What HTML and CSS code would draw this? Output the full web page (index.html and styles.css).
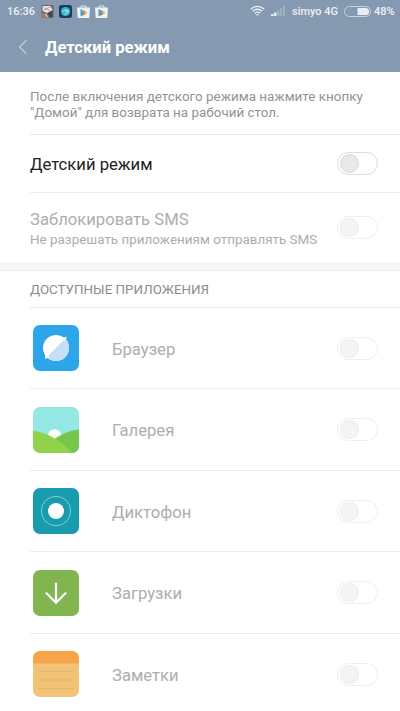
FILE: index.html
```html
<!DOCTYPE html>
<html lang="ru">
<head>
<meta charset="utf-8">
<title>Детский режим</title>
<link rel="stylesheet" href="styles.css">
</head>
<body>
<div class="screen">
  <header class="header">
    <div class="status">
      <span class="clock">16:36</span>
      <svg class="notif" width="13" height="13" viewBox="0 0 12 13"><rect width="12" height="13" rx="1" fill="#6b6568"/><path d="M1 1h8l2 4-5 3-5-2z" fill="#e6e4e4"/><path d="M2 5l7-3M3 3l6 3M1 9l3-1" stroke="#c97f7d" stroke-width=".8"/><path d="M0 9l5-1 3 5H0z" fill="#9a7d6b"/><path d="M6 8l5-2v6H8z" fill="#3f4755"/><path d="M4 9l2 3" stroke="#eee"/></svg>
      <svg class="notif" width="13" height="13" viewBox="0 0 13 13"><rect width="13" height="13" rx="2.5" fill="#22395f"/><circle cx="6.5" cy="6.5" r="4.6" fill="#35b5cc"/><path d="M3 7c2-3 5-3 7-1-1 3-4 4-6 3 2 0 3-1 4-2-2-1-3-1-5 0z" fill="#8ce5df"/></svg>
      <svg class="notif" width="13" height="13" viewBox="0 0 13 13"><path d="M4 3V1h5v2" fill="none" stroke="#dde5eb"/><path d="M0 2.500h13L12.300 13H.7z" fill="#eef2f3"/><path d="M3.500 4v7.500L7 7.700z" fill="#27a9c9"/><path d="M3.500 4L7 7.700 8.600 6.300z" fill="#4bb878"/><path d="M3.500 11.500L7 7.700l1.600 1.400z" fill="#dc4256"/><path d="M7 7.700l1.600-1.400 2 1.400-2 1.400z" fill="#efb53e"/></svg>
      <svg class="notif" width="13" height="13" viewBox="0 0 13 13"><path d="M4 3V1h5v2" fill="none" stroke="#dde5eb"/><path d="M0 2.500h13L12.300 13H.7z" fill="#eef2f3"/><path d="M3.500 4v7.500L7 7.700z" fill="#27a9c9"/><path d="M3.500 4L7 7.700 8.600 6.300z" fill="#4bb878"/><path d="M3.500 11.500L7 7.700l1.600 1.400z" fill="#dc4256"/><path d="M7 7.700l1.600-1.400 2 1.400-2 1.400z" fill="#efb53e"/></svg>
      <span class="spacer"></span>
      <svg class="wifi" width="15" height="12" viewBox="0 0 15 12" fill="none" stroke="#e9eef3" stroke-width="1.300"><path d="M.7 4.200Q7.500-1.500 14.300 4.200M2.800 6.300Q7.500 2.200 12.200 6.300M4.800 8.300Q7.500 6 10.200 8.300"/><path d="M6 9.200h3L7.500 11z" fill="#e9eef3" stroke="none"/></svg>
      <svg class="signal" width="14" height="10" viewBox="0 0 14 10"><path d="M0 8h2.500v2H0zM3 6.500h2.500V10H3z" fill="#e9eef3"/><path d="M6.300 4.500h2V10h-2zM9.200 2.500h1.700V10H9.200zM12 0h1.700v10H12z" fill="#a5b4c6"/></svg>
      <span class="carrier">simyo 4G</span>
      <svg class="battery" width="27" height="11" viewBox="0 0 27 11"><rect x=".5" y=".5" width="26" height="10" rx="5" fill="none" stroke="#c9d3df"/><path d="M13.500 2h8a3.500 3.500 0 0 1 0 7h-8z" fill="#e9eef3"/></svg>
      <span class="percent">48%</span>
    </div>
    <div class="titlebar">
      <svg class="back" width="10" height="16" viewBox="0 0 10 16"><path d="M8.500 1L1.500 8l7 7" fill="none" stroke="#c6d0dc" stroke-width="1.100"/></svg>
      <h1 class="title">Детский режим</h1>
    </div>
  </header>

  <div class="notice">После включения детского режима нажмите кнопку<br>"Домой" для возврата на рабочий стол.</div>

  <div class="row mode"><span class="label">Детский режим</span><span class="switch active"></span></div>
  <div class="row sms">
    <div class="texts"><span class="label dim">Заблокировать SMS</span><span class="sub">Не разрешать приложениям отправлять SMS</span></div>
    <span class="switch"></span>
  </div>
  <div class="band"></div>
  <h2 class="section">ДОСТУПНЫЕ ПРИЛОЖЕНИЯ</h2>

  <div class="row app">
    <svg class="icon" viewBox="0 0 46 46"><rect width="46" height="46" rx="7" fill="#2ca5ea"/><circle cx="23" cy="23" r="13" fill="#fff"/><path d="M32.200 13.800A13 13 0 0 1 13.800 32.200z" fill="#c5dff9"/><path d="M29 12.500L34 12 32.200 16zM12.500 29L12 34l5-2z" fill="#fff"/></svg>
    <span class="name">Браузер</span><span class="switch"></span>
  </div>
  <div class="row app">
    <svg class="icon" viewBox="0 0 46 46"><defs><clipPath id="tile"><rect width="46" height="46" rx="7"/></clipPath></defs><g clip-path="url(#tile)"><path d="M0 0h46v46H0z" fill="#94e7e2"/><circle cx="21.500" cy="29" r="6.700" fill="#fff"/><path d="M19 34Q31 24 46 22.500V46H19z" fill="#76c64b"/><path d="M0 23.500Q24 28 39 46H0z" fill="#91d24c"/></g></svg>
    <span class="name">Галерея</span><span class="switch"></span>
  </div>
  <div class="row app">
    <svg class="icon" viewBox="0 0 46 46"><rect width="46" height="46" rx="7" fill="#189cad"/><circle cx="23" cy="23" r="14.700" fill="none" stroke="#83cbd4"/><circle cx="23" cy="23" r="8" fill="#fff"/></svg>
    <span class="name">Диктофон</span><span class="switch"></span>
  </div>
  <div class="row app">
    <svg class="icon" viewBox="0 0 46 46"><rect width="46" height="46" rx="7" fill="#80b54f"/><path d="M23 13.500V33M13.500 23.200L23 32.700l9.500-9.500" fill="none" stroke="#fff" stroke-width="2.200" stroke-linecap="round"/></svg>
    <span class="name">Загрузки</span><span class="switch"></span>
  </div>
  <div class="row app">
    <svg class="icon" viewBox="0 0 46 46"><g clip-path="url(#tile)"><path d="M0 0h46v46H0z" fill="#f3c478"/><path d="M0 0h46v12.500H0z" fill="#f6a54b"/></g><path d="M5 20.500h36M5 29h36M5 37.500h36" stroke="#deb26c" stroke-width=".8"/></svg>
    <span class="name">Заметки</span><span class="switch"></span>
  </div>
</div>
</body>
</html>
```
FILE: styles.css
```css
* { box-sizing: border-box; }
body { margin: 0; background: #fff; font-family: Roboto, sans-serif; }
.screen { width: 400px; height: 711px; overflow: hidden; background: #fff; }
.header { height: 72px; background: #8599b1; color: #fff; }
.status { display: flex; align-items: center; height: 22px; padding: 0 6px 0 7px; font-size: 11px; font-weight: 500; color: #edf1f5; }
.clock { width: 34px; white-space: nowrap; }
.notif { margin-right: 5px; flex: none; }
.spacer { flex: 1; }
.wifi { margin-right: 6px; }
.signal { margin-right: 7px; }
.carrier { width: 52px; white-space: nowrap; }
.battery { margin-right: 3px; }
.percent { width: 20px; white-space: nowrap; }
.titlebar { display: flex; align-items: center; height: 50px; padding-left: 18px; }
.back { flex: none; margin-right: 17px; }
.title { margin: 0; padding-top: 2px; font-size: 16.650px; font-weight: 700; line-height: 20px; }
.notice { height: 62.500px; margin-left: 30px; padding-top: 17px; border-bottom: 1px solid #e9e9e9; font-size: 13.430px; line-height: 15.600px; color: #939393; white-space: nowrap; }
.row { display: flex; align-items: center; margin-left: 30px; padding-right: 22px; border-bottom: 1px solid #ededed; }
.mode { height: 58.300px; }
.label { display: block; padding-top: 3px; font-size: 16.650px; line-height: 20px; color: #222; white-space: nowrap; }
.label.dim { padding-top: 1px; color: #adadad; }
.texts { padding-top: 3px; }
.sub { display: block; padding-top: 1px; font-size: 13.430px; line-height: 18px; color: #adadad; white-space: nowrap; }
.sms { height: 69.200px; border-bottom: 0; }
.switch { flex: none; display: flex; align-items: center; width: 41px; height: 23px; margin-left: auto; padding-left: 2px; border: 1px solid #eee; border-radius: 12px; }
.switch::before { content: ""; width: 17px; height: 17px; border: 1px solid #ebebeb; border-radius: 50%; background: #f4f4f4; }
.switch.active { border-color: #dcdcdc; }
.switch.active::before { border-color: #d8d8d8; background: #e9e9e9; }
.band { height: 9px; background: #f6f6f6; border-bottom: 1px solid #ececec; }
.section { display: flex; align-items: center; height: 37px; margin: 0 0 0 30px; padding-top: 2px; border-bottom: 1px solid #e9e9e9; font-size: 13.380px; font-weight: 400; color: #8c8c8c; }
.app { height: 81.500px; }
.icon { flex: none; width: 46px; height: 46px; margin: 0 33px 0 3px; }
.name { padding-top: 3px; font-size: 16.650px; line-height: 20px; color: #adadad; }
```
